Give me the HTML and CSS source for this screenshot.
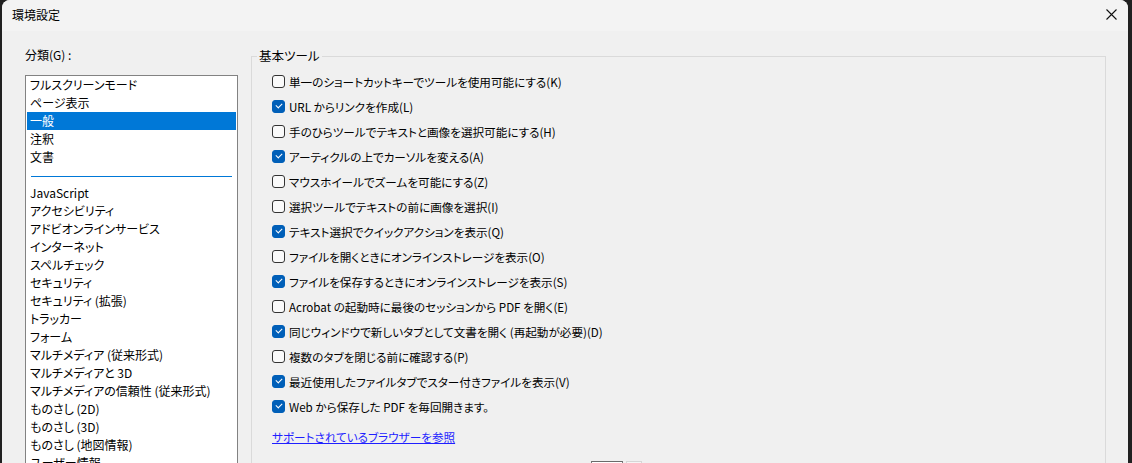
FILE: index.html
```html
<!DOCTYPE html>
<html lang="ja">
<head>
    <meta charset="UTF-8">
    <link rel="stylesheet" href="styles.css">
    <title>環境設定</title>
</head>
<body>
<div class="window">
    <div class="titlebar">
        <span class="title">環境設定</span>
        <svg class="close" width="11" height="11" viewBox="0 0 11 11">
            <path d="M0.5 0.5L10.5 10.5M10.5 0.5L0.5 10.5" stroke="#111" stroke-width="1.1" fill="none"/>
        </svg>
    </div>

    <div class="content">
        <div class="sidebar">
            <div class="cat-label">分類(G) :</div>
            <ul class="catlist">
                <li>フルスクリーンモード</li>
                <li>ページ表示</li>
                <li class="selected">一般</li>
                <li>注釈</li>
                <li>文書</li>
                <li class="sep"></li>
                <li>JavaScript</li>
                <li>アクセシビリティ</li>
                <li>アドビオンラインサービス</li>
                <li>インターネット</li>
                <li>スペルチェック</li>
                <li>セキュリティ</li>
                <li>セキュリティ (拡張)</li>
                <li>トラッカー</li>
                <li>フォーム</li>
                <li>マルチメディア (従来形式)</li>
                <li>マルチメディアと 3D</li>
                <li>マルチメディアの信頼性 (従来形式)</li>
                <li>ものさし (2D)</li>
                <li>ものさし (3D)</li>
                <li>ものさし (地図情報)</li>
                <li>ユーザー情報</li>
            </ul>
        </div>

        <fieldset class="group">
            <legend>基本ツール</legend>
            <div class="opts">
                <label class="opt"><span class="box"></span>単一のショートカットキーでツールを使用可能にする(K)</label>
                <label class="opt"><span class="box on"></span>URL からリンクを作成(L)</label>
                <label class="opt"><span class="box"></span>手のひらツールでテキストと画像を選択可能にする(H)</label>
                <label class="opt"><span class="box on"></span>アーティクルの上でカーソルを変える(A)</label>
                <label class="opt"><span class="box"></span>マウスホイールでズームを可能にする(Z)</label>
                <label class="opt"><span class="box"></span>選択ツールでテキストの前に画像を選択(I)</label>
                <label class="opt"><span class="box on"></span>テキスト選択でクイックアクションを表示(Q)</label>
                <label class="opt"><span class="box"></span>ファイルを開くときにオンラインストレージを表示(O)</label>
                <label class="opt"><span class="box on"></span>ファイルを保存するときにオンラインストレージを表示(S)</label>
                <label class="opt"><span class="box"></span>Acrobat の起動時に最後のセッションから PDF を開く(E)</label>
                <label class="opt"><span class="box on"></span>同じウィンドウで新しいタブとして文書を開く (再起動が必要)(D)</label>
                <label class="opt"><span class="box"></span>複数のタブを閉じる前に確認する(P)</label>
                <label class="opt"><span class="box on"></span>最近使用したファイルタブでスター付きファイルを表示(V)</label>
                <label class="opt"><span class="box on"></span>Web から保存した PDF を毎回開きます。</label>

                <a class="link" href="#">サポートされているブラウザーを参照</a>

                <div class="row-more">
                    <span class="more-label">最近使用したファイルの一覧数</span>
                    <span class="spin"></span>
                    <span class="spin-btn"></span>
                    <span class="more-tail">件</span>
                </div>
            </div>
        </fieldset>
    </div>
</div>
</body>
</html>
```

FILE: styles.css
```css
html, body {
    margin: 0;
    height: 100%;
    overflow: hidden;
}

body {
    background: #202020;
    font-family: "Noto Sans CJK JP", "Noto Sans", sans-serif;
    font-size: 12px;
    color: #000;
    font-feature-settings: "palt";
}

.window {
    margin-left: 2px;
    width: 1126px;
    height: 463px;
    background: #f0f0f0;
    border-radius: 8px 8px 0 0;
    overflow: hidden;
}

.titlebar {
    height: 31px;
    background: #f3f3f3;
    display: flex;
    align-items: center;
    justify-content: space-between;
    padding: 0 11px 0 10px;
}

.title {
    line-height: 16px;
    margin-top: -1px;
}

.close {
    margin-top: -2px;
}

.content {
    display: flex;
    align-items: flex-start;
    gap: 13px;
    padding: 16px 0 0 23px;
}

/* colonne de gauche */
.sidebar {
    width: 213px;
    flex: none;
}

.cat-label {
    line-height: 16px;
    margin-bottom: 12px;
}

.catlist {
    list-style: none;
    margin: 0;
    padding: 0 1px;
    background: #fff;
    border: 1px solid #828282;
    height: 420px;
}

.catlist li {
    height: 18px;
    line-height: 18px;
    padding-left: 3px;
    white-space: nowrap;
}

.catlist li.selected {
    background: #0078d7;
    color: #fff;
}

.catlist li.sep {
    position: relative;
}

.catlist li.sep::after {
    content: "";
    position: absolute;
    left: 4px;
    right: 4px;
    top: 10px;
    border-top: 1px solid #0078d7;
}

/* groupe de droite */
.group {
    margin: 1px 0 0 0;
    padding: 0;
    width: 853px;
    height: 430px;
    border: 1px solid #dadada;
    border-bottom: none;
    min-width: 0;
}

.group legend {
    margin-left: 5px;
    padding: 0 2px;
    line-height: 16px;
    font-size: 12.5px;
}

.opts {
    padding: 5px 0 0 20px;
    display: flex;
    flex-direction: column;
    align-items: flex-start;
    font-size: 11.6px;
}

.opt {
    height: 25px;
    display: flex;
    align-items: center;
    white-space: nowrap;
}

.box {
    width: 11px;
    height: 11px;
    border: 1px solid #333;
    border-radius: 3px;
    background: #fafafa;
    margin-right: 4px;
    position: relative;
    flex: none;
}

.box.on {
    background: #005fb8;
    border-color: #005fb8;
}

.box.on::after {
    content: "";
    position: absolute;
    left: 3px;
    top: 2px;
    width: 5px;
    height: 3px;
    border-left: 1px solid #fff;
    border-bottom: 1px solid #fff;
    transform: rotate(-45deg);
}

.link {
    color: #1f1fff;
    text-decoration: underline;
    line-height: 16px;
    margin-top: 10px;
}

.row-more {
    display: flex;
    align-items: center;
    height: 22px;
    margin-top: 16px;
    padding-left: 50px;
}

.more-label {
    width: 269px;
}

.spin {
    width: 30px;
    height: 20px;
    background: #fff;
    border: 1px solid #7a7a7a;
    border-top-color: #6a6a6a;
}

.spin-btn {
    width: 14px;
    height: 20px;
    margin-left: 3px;
    border: 1px solid #d6d6d6;
    background: #f5f5f5;
}

.more-tail {
    margin-left: 20px;
}
```
